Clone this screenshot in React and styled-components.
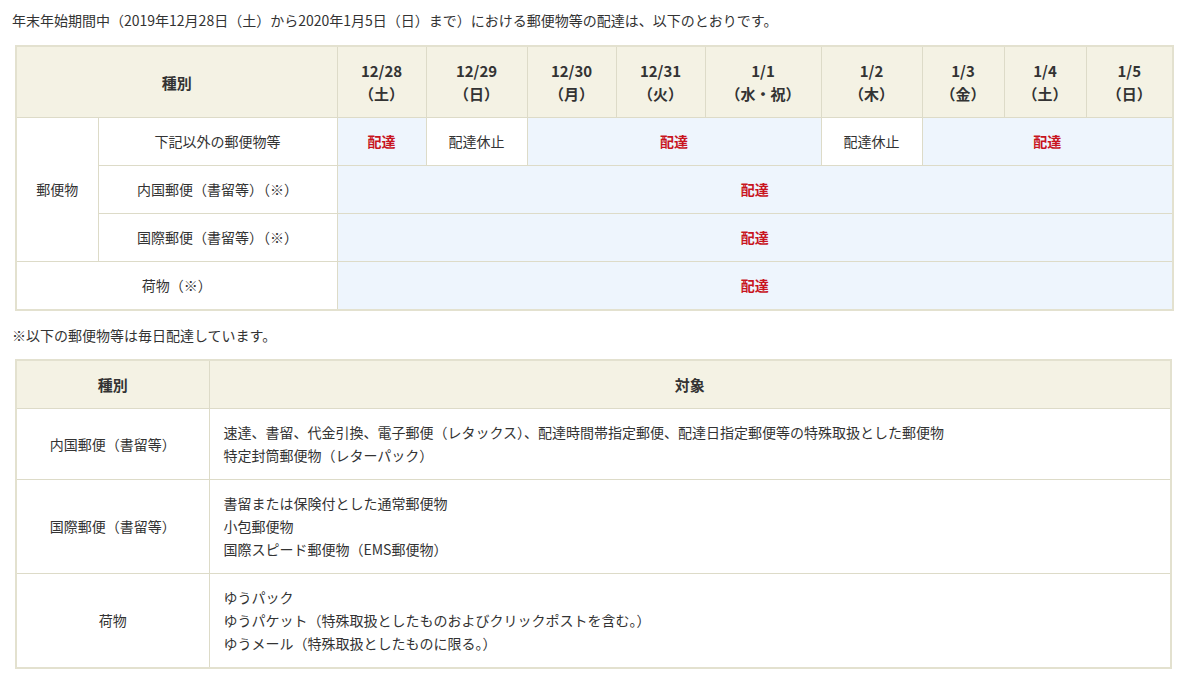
import React from 'react';
import styled, { createGlobalStyle } from 'styled-components';

const Global = createGlobalStyle`
  body { margin: 0; background: #fff; color: #333; font-family: "Noto Sans CJK JP", "Liberation Sans", sans-serif; font-size: 14px; }
`;

const Page = styled.div`
  padding: 8px 28px 0 15px;
  width: 1157px;
`;

const Lead = styled.p`
  margin: 0 0 13px -3px;
  line-height: 24px;
`;

const Note = styled.p`
  margin: 12px 0 12px -3px;
  line-height: 24px;
`;

const Table = styled.table`
  width: 1157px;
  border-collapse: collapse;
  table-layout: fixed;
  border: 2px solid #e3e1cf;
`;

const Th = styled.th`
  background: #f4f2e4;
  border: 1px solid #dddbc8;
  font-weight: bold;
  font-size: 15px;
  text-align: center;
  height: ${p => p.$h || 70}px;
  line-height: 23px;
  padding: 0;
`;

const Td = styled.td`
  border: 1px solid #dddbc8;
  text-align: ${p => (p.$left ? 'left' : 'center')};
  background: ${p => (p.$blue ? '#eef5fd' : '#fff')};
  color: ${p => (p.$red ? '#c8141e' : '#333')};
  font-weight: ${p => (p.$red ? 'bold' : 'normal')};
  height: ${p => p.$h || 47}px;
  padding: ${p => (p.$left ? '0 14px' : '0')};
  line-height: 23px;
`;

const days = [
  ['12/28', '（土）'], ['12/29', '（日）'], ['12/30', '（月）'], ['12/31', '（火）'],
  ['1/1', '（水・祝）'], ['1/2', '（木）'], ['1/3', '（金）'], ['1/4', '（土）'], ['1/5', '（日）'],
];
const widths = [82, 239, 89, 101, 89, 89, 116, 101, 82, 82, 87];

const rows2 = [
  ['内国郵便（書留等）', ['速達、書留、代金引換、電子郵便（レタックス）、配達時間帯指定郵便、配達日指定郵便等の特殊取扱とした郵便物', '特定封筒郵便物（レターパック）'], 70],
  ['国際郵便（書留等）', ['書留または保険付とした通常郵便物', '小包郵便物', '国際スピード郵便物（EMS郵便物）'], 93],
  ['荷物', ['ゆうパック', 'ゆうパケット（特殊取扱としたものおよびクリックポストを含む。）', 'ゆうメール（特殊取扱としたものに限る。）'], 93],
];

export default function App() {
  return (
    <Page>
      <Global />
      <Lead>年末年始期間中（2019年12月28日（土）から2020年1月5日（日）まで）における郵便物等の配達は、以下のとおりです。</Lead>
      <Table>
        <colgroup>{widths.map((w, i) => <col key={i} style={{ width: w }} />)}</colgroup>
        <thead>
          <tr>
            <Th colSpan={2}>種別</Th>
            {days.map(([d, w]) => <Th key={d}>{d}<br />{w}</Th>)}
          </tr>
        </thead>
        <tbody>
          <tr>
            <Td rowSpan={3}>郵便物</Td>
            <Td>下記以外の郵便物等</Td>
            <Td $blue $red>配達</Td>
            <Td>配達休止</Td>
            <Td $blue $red colSpan={3}>配達</Td>
            <Td>配達休止</Td>
            <Td $blue $red colSpan={3}>配達</Td>
          </tr>
          <tr>
            <Td>内国郵便（書留等）（※）</Td>
            <Td $blue $red colSpan={9}>配達</Td>
          </tr>
          <tr>
            <Td>国際郵便（書留等）（※）</Td>
            <Td $blue $red colSpan={9}>配達</Td>
          </tr>
          <tr>
            <Td colSpan={2}>荷物（※）</Td>
            <Td $blue $red colSpan={9}>配達</Td>
          </tr>
        </tbody>
      </Table>
      <Note>※以下の郵便物等は毎日配達しています。</Note>
      <Table>
        <colgroup><col style={{ width: 193 }} /><col /></colgroup>
        <thead>
          <tr><Th $h={47}>種別</Th><Th $h={47}>対象</Th></tr>
        </thead>
        <tbody>
          {rows2.map(([k, lines, h]) => (
            <tr key={k}>
              <Td $h={h}>{k}</Td>
              <Td $h={h} $left>{lines.map(l => <div key={l}>{l}</div>)}</Td>
            </tr>
          ))}
        </tbody>
      </Table>
    </Page>
  );
}
